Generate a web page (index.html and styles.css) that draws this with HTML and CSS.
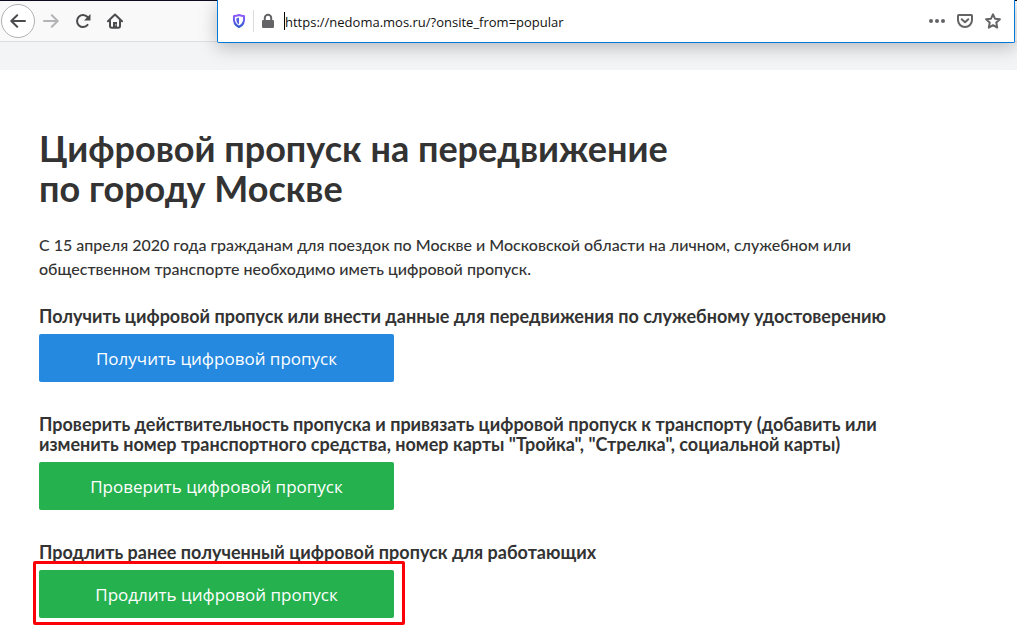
FILE: index.html
```html
<!DOCTYPE html>
<html lang="ru">
<head>
<meta charset="utf-8">
<meta name="viewport" content="width=device-width, initial-scale=1">
<title>Цифровой пропуск</title>
<link rel="stylesheet" href="styles.css">
</head>
<body>
<header class="toolbar">
  <nav class="nav" aria-label="Навигация">
    <button class="tool back" type="button" aria-label="Назад">
      <svg class="icon" viewBox="0 0 16 16"><path d="M15 8H1.500M7.200 2.200L1.300 8l5.900 5.800"/></svg>
    </button>
    <button class="tool forward" type="button" aria-label="Вперёд" disabled>
      <svg class="icon" viewBox="0 0 16 16"><path d="M1 8h13.500M8.800 2.200L14.700 8l-5.900 5.800"/></svg>
    </button>
    <button class="tool" type="button" aria-label="Обновить">
      <svg class="icon" viewBox="0 0 16 16"><path d="M12.600 11.900A6 6 0 1 1 12.500 4"/><path class="solid" d="M15.500 1v6.500H9z"/></svg>
    </button>
    <button class="tool" type="button" aria-label="Домой">
      <svg class="icon" viewBox="0 0 16 16"><path d="M1 8.300L8 1.500l7 6.800M3 7.500V13q0 1.800 1.800 1.800h6.400q1.800 0 1.800-1.800V7.500"/><path class="solid" fill-rule="evenodd" d="M6 15V9h4v6zM8.300 11.200h1v1.200h-1z"/></svg>
    </button>
  </nav>
  <form class="address">
    <svg class="icon shield" viewBox="0 0 16 16"><defs><linearGradient id="violet" x1="0" y1="0" x2="0" y2="1"><stop offset="0" stop-color="#9059ff"/><stop offset="1" stop-color="#2f5bd0"/></linearGradient></defs><path stroke="url(#violet)" d="M8 2C6 2.800 4.500 3 3 3c-.6 4.900.2 9 5 11 4.800-2 5.600-6.100 5-11C11.500 3 10 2.800 8 2z"/><path class="shield-half" d="M8 4.500v7C5.800 10 5.300 8.300 5.300 5.400 6.300 5.200 7 5 8 4.500z"/></svg>
    <span class="divider"></span>
    <svg class="icon lock" viewBox="0 0 16 16"><path d="M4.800 8V5a3.200 3.200 0 0 1 6.400 0v3"/><rect class="solid" x="2" y="7" width="12" height="8" rx="1.200"/></svg>
    <span class="caret"></span>
    <input class="url" type="text" aria-label="Адрес" value="https://nedoma.mos.ru/?onsite_from=popular">
    <button class="action" type="button" aria-label="Действия">
      <svg class="icon" viewBox="0 0 16 16"><g class="solid"><circle cx="2" cy="8" r="2"/><circle cx="8" cy="8" r="2"/><circle cx="14" cy="8" r="2"/></g></svg>
    </button>
    <button class="action" type="button" aria-label="Сохранить в Pocket">
      <svg class="icon" viewBox="0 0 16 16"><path d="M1.800 2h12.400q.8 0 .8.800V7a7 7 0 0 1-14 0V2.800Q1 2 1.800 2z"/><path d="M4.700 6.200L8 9.300l3.300-3.100"/></svg>
    </button>
    <button class="action" type="button" aria-label="В закладки">
      <svg class="icon" viewBox="0 0 16 16"><path d="M8 1.300l2 4.400 4.900.6-3.600 3.300.9 5L8 12.200l-4.200 2.400.9-5L1.100 6.300 6 5.700z"/></svg>
    </button>
  </form>
</header>
<div class="band"></div>
<main class="content">
  <h1 class="title">Цифровой пропуск на передвижение<br>по городу Москве</h1>
  <p class="intro">С 15 апреля 2020 года гражданам для поездок по Москве и Московской области на личном, служебном или<br>общественном транспорте необходимо иметь цифровой пропуск.</p>
  <section class="option">
    <h2 class="caption">Получить цифровой пропуск или внести данные для передвижения по служебному удостоверению</h2>
    <button class="pass blue" type="button">Получить цифровой пропуск</button>
  </section>
  <section class="option">
    <h2 class="caption">Проверить действительность пропуска и привязать цифровой пропуск к транспорту (добавить или<br>изменить номер транспортного средства, номер карты "Тройка", "Стрелка", социальной карты)</h2>
    <button class="pass green" type="button">Проверить цифровой пропуск</button>
  </section>
  <section class="option">
    <h2 class="caption">Продлить ранее полученный цифровой пропуск для работающих</h2>
    <button class="pass green marked" type="button">Продлить цифровой пропуск</button>
  </section>
</main>
</body>
</html>
```

FILE: styles.css
```css
* { box-sizing: border-box; }
body {
  margin: 0;
  background: #fff;
  color: #333;
  font-family: Lato, "Open Sans", sans-serif;
}
button {
  border: 0;
  padding: 0;
  color: inherit;
  font: inherit;
  background: none;
}
.toolbar {
  display: flex;
  align-items: flex-start;
  height: 42px;
  padding-right: 2px;
  background: #f9f9fa;
  border-top: 1px solid #0c0c20;
  border-bottom: 1px solid #dedee0;
}
.nav {
  display: flex;
  flex: 0 0 217px;
  align-items: center;
  height: 40px;
  padding-left: 1px;
}
.tool {
  display: flex;
  align-items: center;
  justify-content: center;
  width: 32px;
  height: 34px;
  color: #4c4c4f;
}
.back {
  width: 34px;
  background: #fff;
  border: 1px solid #b1b1b3;
  border-radius: 50%;
}
.forward { color: #b4b4b6; }
.icon {
  display: block;
  flex: none;
  width: 16px;
  height: 16px;
  fill: none;
  stroke: currentColor;
  stroke-width: 2;
  stroke-linecap: round;
  stroke-linejoin: round;
}
.solid {
  fill: currentColor;
  stroke: none;
}
.address {
  position: relative;
  display: flex;
  flex: 1;
  align-items: center;
  height: 43px;
  margin-top: -1px;
  padding: 0 13px;
  color: #646466;
  background: #fff;
  border: 1px solid #0078d7;
  border-top: 0;
  border-radius: 0 0 2px 2px;
  box-shadow: 0 4px 18px rgba(0, 0, 0, 0.25);
}
.shield-half {
  fill: #5560e0;
  stroke: none;
}
.divider {
  width: 1px;
  height: 22px;
  margin: 0 6px;
  background: #dcdcde;
}
.caret {
  width: 1px;
  height: 18px;
  margin-left: 8px;
  background: #000;
}
.url {
  flex: 1;
  min-width: 0;
  padding: 2px 0 0;
  border: 0;
  outline: 0;
  color: #111;
  background: none;
  font-family: "Open Sans", sans-serif;
  font-size: 13px;
}
.action {
  display: flex;
  width: 16px;
  margin-left: 12px;
}
.band {
  height: 28px;
  background: #f3f4f6;
}
.content { padding: 58px 39px 16px; }
.title {
  margin: 0;
  font-size: 36px;
  font-weight: 700;
  line-height: 40px;
}
.intro {
  margin: 25px 0;
  font-size: 16px;
  font-weight: 500;
  line-height: 24px;
}
.option { margin-bottom: 32px; }
.option:last-child { margin-bottom: 0; }
.caption {
  margin: 0 0 8px;
  font-size: 18px;
  font-weight: 700;
  line-height: 20px;
}
.pass {
  position: relative;
  display: block;
  width: 355px;
  max-width: 100%;
  height: 48px;
  border-radius: 2px;
  color: #fff;
  font-family: "Open Sans", sans-serif;
  font-size: 17px;
}
.blue { background: #2589df; }
.green { background: #25b14e; }
.marked::after {
  content: "";
  position: absolute;
  inset: -9px -11px -7px -6px;
  border: 3px solid #fb0007;
  border-radius: 2px;
}
```
